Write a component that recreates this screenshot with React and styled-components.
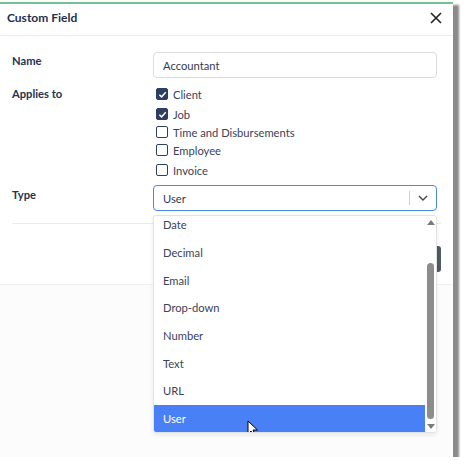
import React from 'react';
import styled, { createGlobalStyle } from 'styled-components';

const GlobalStyle = createGlobalStyle`
  body {
    margin: 0;
    background: #ffffff;
    font-family: Lato, "Open Sans", sans-serif;
  }
`

const Frame = styled.div`
  position: relative;
  width: 453px;
  height: 457px;
  padding-top: 2px;
  box-sizing: border-box;
  background: #fcfcfc;
  box-shadow: 6px 5px 2px #8a8a8a;
`

const Modal = styled.div`
  background: #ffffff;
  border-top: 2px solid #72c293;
  border-bottom: 1px solid #f0f0f0;
  height: 280px;
  display: flex;
  flex-direction: column;
`

const Header = styled.div`
  height: 32px;
  box-sizing: border-box;
  display: flex;
  align-items: center;
  justify-content: space-between;
  padding: 0 10px 4px 7px;
  border-bottom: 1px solid #ececec;
`

const Title = styled.h2`
  margin: 0;
  font-size: 12px;
  font-weight: 700;
  color: #1f2f4d;
`

const Close = styled.button`
  border: 0;
  background: none;
  padding: 0;
  width: 14px;
  height: 14px;
  display: flex;
`

const Body = styled.div`
  padding: 16px 16px 0 12px;
  display: grid;
  grid-template-columns: 141px 284px;
  row-gap: 6px;
`

const Label = styled.div`
  font-size: 11.2px;
  font-weight: 700;
  color: #223353;
  padding-top: ${p => p.$top || 3}px;
`

const Input = styled.div`
  height: 24px;
  border: 1px solid ${p => (p.$focus ? '#4a86f0' : '#dcdcdc')};
  border-radius: 4px;
  display: flex;
  align-items: center;
  padding-left: 9px;
  font-size: 11.2px;
  color: #333c4e;
`

const Checks = styled.div`
  display: flex;
  flex-direction: column;
  padding-left: 3px;
  margin-bottom: -1px;
`

const CheckRow = styled.label`
  display: flex;
  align-items: center;
  gap: 5px;
  height: ${p => p.$h || 20}px;
  font-size: 11.2px;
  color: #3a4357;
`

const Box = styled.span`
  width: 10px;
  height: 10px;
  border: 1.5px solid #2d3e5e;
  border-radius: 2px;
  background: ${p => (p.$checked ? '#2d3e5e' : '#ffffff')};
  display: flex;
  align-items: center;
  justify-content: center;
`

const SelectText = styled.span`
  flex: 1;
`

const Divider = styled.span`
  width: 1px;
  height: 14px;
  background: #cfcfcf;
`

const Chevron = styled.span`
  width: 26px;
  display: flex;
  justify-content: center;
`

const Footer = styled.div`
  margin: 12px 12px 0;
  border-top: 1px solid #ececec;
  flex: 1;
  display: flex;
  justify-content: flex-end;
  align-items: flex-start;
  padding-top: 22px;
`

const Button = styled.button`
  height: 26px;
  width: 60px;
  border: 0;
  border-radius: 3px;
  background: #505a68;
`

const Menu = styled.div`
  position: absolute;
  left: 153px;
  top: 215px;
  width: 282px;
  height: 216px;
  background: #ffffff;
  border: 1px solid #e3e3e3;
  border-radius: 3px;
  box-shadow: 0 2px 4px rgba(0, 0, 0, 0.08);
  display: flex;
  overflow: hidden;
`

const Options = styled.div`
  flex: 1;
  margin-top: -5px;
`

const Option = styled.div`
  height: 27.7px;
  display: flex;
  align-items: center;
  padding-left: 9px;
  font-size: 11.2px;
  color: ${p => (p.$active ? '#ffffff' : '#3a4357')};
  background: ${p => (p.$active ? '#4a80f5' : 'transparent')};
  position: relative;
`

const Scrollbar = styled.div`
  width: 11px;
  display: flex;
  flex-direction: column;
  align-items: center;
  background: #ffffff;
`

const Arrow = styled.span`
  height: 12px;
  display: flex;
  align-items: center;
`

const Track = styled.div`
  flex: 1;
  width: 100%;
  display: flex;
  justify-content: center;
  padding-top: 35px;
`

const Thumb = styled.div`
  width: 7px;
  height: 156px;
  border-radius: 4px;
  background: #8c8c8c;
`

const Cursor = styled.svg`
  position: absolute;
  left: 93px;
  top: 15px;
`

const options = ['Date', 'Decimal', 'Email', 'Drop-down', 'Number', 'Text', 'URL', 'User'];

const Check = ({ label, checked, h }) => (
  <CheckRow $h={h}>
    <Box $checked={checked}>
      {checked && (
        <svg width="9" height="9" viewBox="0 0 10 10">
          <path d="M1.5 5.2 L4 7.6 L8.6 2.4" fill="none" stroke="#fff" strokeWidth="1.6" />
        </svg>
      )}
    </Box>
    {label}
  </CheckRow>
);

export default function App() {
  return (
    <>
      <GlobalStyle />
      <Frame>
        <Modal>
          <Header>
            <Title>Custom Field</Title>
            <Close>
              <svg width="14" height="14" viewBox="0 0 14 14">
                <path d="M2 2 L12 12 M12 2 L2 12" stroke="#222" strokeWidth="1.6" />
              </svg>
            </Close>
          </Header>
          <Body>
            <Label $top={2}>Name</Label>
            <Input>Accountant</Input>
            <Label>Applies to</Label>
            <Checks>
              <Check label="Client" checked h={20} />
              <Check label="Job" checked h={20} />
              <Check label="Time and Disbursements" h={16} />
              <Check label="Employee" h={20} />
              <Check label="Invoice" h={20} />
            </Checks>
            <Label>Type</Label>
            <Input $focus>
              <SelectText>User</SelectText>
              <Divider />
              <Chevron>
                <svg width="10" height="6" viewBox="0 0 10 6">
                  <path d="M1 1 L5 5 L9 1" fill="none" stroke="#444" strokeWidth="1.4" />
                </svg>
              </Chevron>
            </Input>
          </Body>
          <Footer>
            <Button />
          </Footer>
        </Modal>
        <Menu>
          <Options>
            {options.map(o => (
              <Option key={o} $active={o === 'User'}>
                {o}
                {o === 'User' && (
                  <Cursor width="12" height="18" viewBox="0 0 12 18">
                    <path d="M1 1 L1 14 L4 11 L6.5 16.5 L8.5 15.6 L6 10 L10.5 10 Z" fill="#fff" stroke="#000" strokeWidth="1" />
                  </Cursor>
                )}
              </Option>
            ))}
          </Options>
          <Scrollbar>
            <Arrow>
              <svg width="8" height="5" viewBox="0 0 8 5"><path d="M0 5 L4 0 L8 5 Z" fill="#7a7a7a" /></svg>
            </Arrow>
            <Track>
              <Thumb />
            </Track>
            <Arrow>
              <svg width="8" height="5" viewBox="0 0 8 5"><path d="M0 0 L4 5 L8 0 Z" fill="#7a7a7a" /></svg>
            </Arrow>
          </Scrollbar>
        </Menu>
      </Frame>
    </>
  );
}
